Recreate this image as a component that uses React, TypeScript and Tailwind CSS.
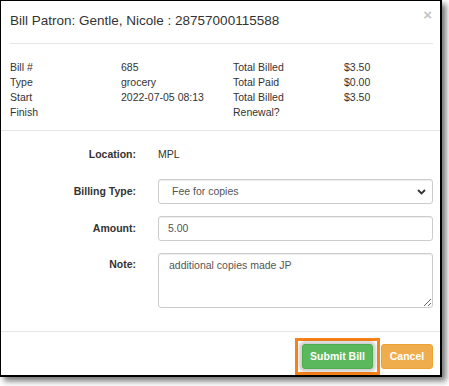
import React from "react";

const font = { fontFamily: '"Liberation Sans", Arial, Helvetica, sans-serif' };

function Row({ cells }: { cells: string[] }) {
  return (
    <>
      {cells.map((c, i) => (
        <div key={i} className="h-[15px] leading-[15px] whitespace-nowrap">
          {c}
        </div>
      ))}
    </>
  );
}

export default function App() {
  return (
    <div className="w-[449px] h-[386px] bg-white overflow-hidden" style={font}>
      <div className="w-[442px] h-[377px] box-border border-black border-l border-t border-r-2 border-b-2 bg-white shadow-[4px_4px_6px_rgba(0,0,0,0.55)] flex flex-col text-[#333]">
        {/* Header */}
        <div className="ml-[9px] mr-[7px] h-[43px] box-border pt-[10px] border-b border-[#e5e5e5] flex justify-between items-start">
          <div className="text-[13.5px] leading-[19px]">Bill Patron: Gentle, Nicole : 28757000115588</div>
          <div className="text-[15px] leading-[8px] font-bold text-[#c4c4c4] mr-[1px] mt-[0px]">×</div>
        </div>

        {/* Summary */}
        <div className="pt-[16px] pb-[10px] pl-[9px] border-b border-[#e5e5e5] text-[10.5px]">
          <div className="grid grid-cols-[111px_112px_111px_1fr]">
            <Row cells={["Bill #", "685", "Total Billed", "$3.50"]} />
            <Row cells={["Type", "grocery", "Total Paid", "$0.00"]} />
            <Row cells={["Start", "2022-07-05 08:13", "Total Billed", "$3.50"]} />
            <Row cells={["Finish", "", "Renewal?", ""]} />
          </div>
        </div>

        {/* Form */}
        <div className="pt-[11px] pb-[23px] pr-[7px] border-b border-[#e5e5e5] text-[10.5px] grid grid-cols-[135px_1fr] gap-x-[22px] gap-y-[12px]">
          <div className="h-[25px] leading-[25px] font-bold text-right">Location:</div>
          <div className="h-[25px] leading-[25px]">MPL</div>

          <div className="h-[25px] leading-[25px] font-bold text-right">Billing Type:</div>
          <div className="h-[25px] box-border border border-[#ccc] rounded-[3px] flex items-center justify-between pl-[13px] pr-[6px] text-[#555] shadow-[inset_0_1px_1px_rgba(0,0,0,0.075)]">
            <span>Fee for copies</span>
            <svg width="9" height="6" viewBox="0 0 9 6">
              <path d="M1 1 L4.5 4.5 L8 1" stroke="#333" strokeWidth="1.8" fill="none" />
            </svg>
          </div>

          <div className="h-[25px] leading-[25px] font-bold text-right">Amount:</div>
          <div className="h-[25px] box-border border border-[#ccc] rounded-[3px] flex items-center pl-[9px] text-[#555] shadow-[inset_0_1px_1px_rgba(0,0,0,0.075)]">
            5.00
          </div>

          <div className="leading-[22px] font-bold text-right">Note:</div>
          <textarea
            readOnly
            value="additional copies made JP"
            className="h-[55px] w-full box-border border border-[#ccc] rounded-[3px] pl-[10px] pt-[4px] leading-[15px] text-[10.5px] text-[#555] outline-none resize-y shadow-[inset_0_1px_1px_rgba(0,0,0,0.075)]"
            style={font}
          />
        </div>

        {/* Footer */}
        <div className="pt-[6px] pr-[7px] flex justify-end items-start">
          <div className="border-[3px] border-[#f7821b] px-[4px] py-[3px] mr-[1px]">
            <div className="w-[71px] h-[25px] rounded-[3px] bg-[#5cb85c] border border-[#4cae4c] text-white font-bold text-[10.5px] flex items-center justify-center shadow-[0_0_3px_3px_rgba(0,0,0,0.18)]">
              Submit Bill
            </div>
          </div>
          <div className="mt-[6px] w-[52px] h-[25px] rounded-[3px] bg-[#f0ad4e] border border-[#eea236] text-white font-bold text-[10.5px] flex items-center justify-center">
            Cancel
          </div>
        </div>
      </div>
    </div>
  );
}
